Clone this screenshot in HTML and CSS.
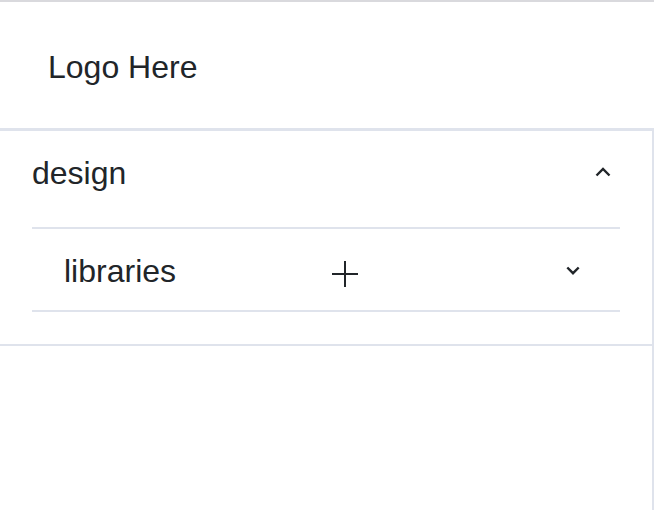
FILE: index.html
```html
<!DOCTYPE html>
<html lang="en">
<head>
<meta charset="utf-8">
<title>Sidebar</title>
<link rel="stylesheet" href="styles.css">
</head>
<body>
<div class="app">
  <header class="header">
    <span class="logo">Logo Here</span>
  </header>
  <nav class="panel">
    <section class="group">
      <div class="group-head">
        <span class="group-title">design</span>
        <svg class="chev chev-up" width="16" height="10" viewBox="0 0 16 10" aria-hidden="true">
          <path d="M1.5 8.5 L8 2 L14.5 8.5" fill="none" stroke="#212529" stroke-width="2.4" stroke-linejoin="miter"/>
        </svg>
      </div>
      <div class="item">
        <span class="item-title">libraries</span>
        <svg class="plus" width="28" height="28" viewBox="0 0 28 28" aria-hidden="true">
          <path d="M1 14 H27 M14 1 V27" fill="none" stroke="#212529" stroke-width="2"/>
        </svg>
        <span class="spacer"></span>
        <svg class="chev chev-down" width="14" height="9" viewBox="0 0 14 9" aria-hidden="true">
          <path d="M1.3 1.5 L7 7.2 L12.7 1.5" fill="none" stroke="#212529" stroke-width="2.4"/>
        </svg>
      </div>
    </section>
  </nav>
</div>
</body>
</html>
```

FILE: styles.css
```css
html, body {
  margin: 0;
  padding: 0;
  background: #ffffff;
}

body {
  font-family: "Liberation Sans", Arial, sans-serif;
  color: #212529;
}

.app {
  display: flex;
  flex-direction: column;
  height: 510px;
  border-top: 2px solid #d9d9dd;
  box-sizing: border-box;
}

.header {
  height: 129px;
  flex: none;
  display: flex;
  align-items: center;
  padding: 3px 0 0 48px;
  box-sizing: border-box;
  border-bottom: 3px solid #dfe3ec;
}

.logo {
  font-size: 32px;
  line-height: 36px;
}

.panel {
  flex: 1;
  border-right: 2px solid #dfe3ec;
}

.group {
  padding: 0 32px 32px 32px;
  border-bottom: 2px solid #dfe3ec;
}

.group-head {
  display: flex;
  align-items: center;
  padding: 24px 9px 36px 0;
  border-bottom: 2px solid #dfe3ec;
}

.group-title {
  flex: 1;
  font-size: 32px;
  line-height: 36px;
}

.item {
  display: flex;
  align-items: center;
  padding: 24px 40px 21px 32px;
  border-bottom: 2px solid #dfe3ec;
}

.item-title {
  flex: none;
  width: 267px;
  font-size: 32px;
  line-height: 36px;
}

.plus {
  flex: none;
  margin-top: 6px;
}

.spacer {
  flex: 1;
}

.chev {
  flex: none;
  display: block;
}

.chev-up {
  margin-top: -2px;
}

.chev-down {
  margin-top: -2px;
}
```
